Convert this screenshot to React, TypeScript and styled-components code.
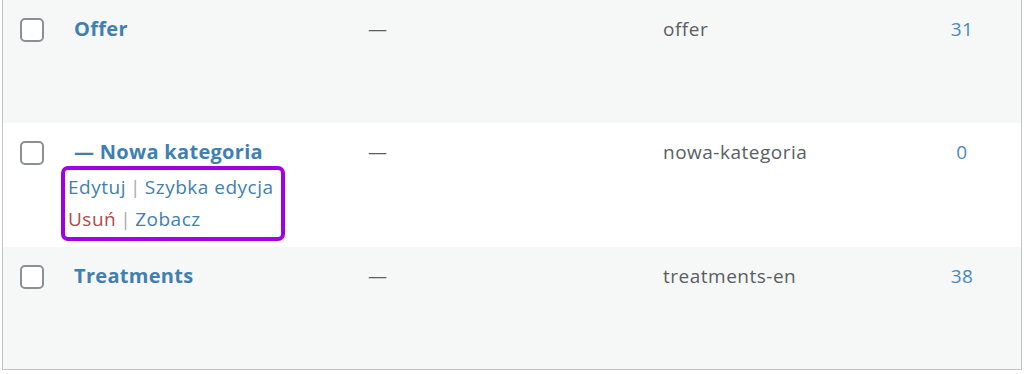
import React from 'react';
import styled, { createGlobalStyle } from 'styled-components';

const GlobalStyle = createGlobalStyle`
  html, body {
    margin: 0;
    padding: 0;
    background: #ffffff;
  }
  body {
    font-family: "Open Sans", "Noto Sans", Arial, sans-serif;
    -webkit-font-smoothing: antialiased;
  }
`;

const Table = styled.div`
  width: 1020px;
  margin-left: 2px;
  border-left: 1px solid #c3c4c7;
  border-right: 1px solid #c3c4c7;
  border-bottom: 1px solid #c3c4c7;
  box-sizing: border-box;
`;

const Row = styled.div<{ $alt?: boolean; $height: number }>`
  display: grid;
  grid-template-columns: 71px 294px 295px 262px 1fr;
  align-items: start;
  height: ${(p) => p.$height}px;
  padding-top: 17px;
  box-sizing: border-box;
  background: ${(p) => (p.$alt ? '#f6f7f7' : '#ffffff')};
`;

const CheckCell = styled.div`
  padding-left: 17px;
  padding-top: 1px;
`;

const Checkbox = styled.span`
  display: block;
  width: 24px;
  height: 24px;
  box-sizing: border-box;
  border: 2px solid #8c8f94;
  border-radius: 5px;
  background: #ffffff;
`;

const TitleCell = styled.div`
  display: flex;
  flex-direction: column;
  align-items: flex-start;
`;

const RowTitle = styled.a`
  font-size: 20px;
  font-weight: 700;
  letter-spacing: 0.3px;
  line-height: 24px;
  color: #3f7fb2;
  text-decoration: none;
`;

const Actions = styled.div`
  margin-top: 2px;
  margin-left: -13px;
  padding: 1px 7px 2px 3px;
  border: 4px solid #a000e6;
  border-radius: 7px;
  font-size: 19px;
  letter-spacing: 0.5px;
  line-height: 32px;
  background: #ffffff;
`;

const ActionLine = styled.div`
  white-space: nowrap;
`;

const ActionLink = styled.a<{ $danger?: boolean }>`
  color: ${(p) => (p.$danger ? '#b1494a' : '#3f7fb2')};
  text-decoration: none;
`;

const Sep = styled.span`
  color: #a7aaad;
  margin: 0 4px;
`;

const TextCell = styled.div`
  font-size: 19px;
  letter-spacing: 0.5px;
  line-height: 24px;
  color: #5a5e63;
`;

const CountCell = styled.div`
  font-size: 19px;
  letter-spacing: 0.5px;
  line-height: 24px;
  color: #4a89bd;
  width: 74px;
  text-align: center;
`;

type Category = {
  name: string;
  slug: string;
  count: number;
  child?: boolean;
  height: number;
};

const rows: Category[] = [
  { name: 'Offer', slug: 'offer', count: 31, height: 123 },
  { name: '— Nowa kategoria', slug: 'nowa-kategoria', count: 0, child: true, height: 124 },
  { name: 'Treatments', slug: 'treatments-en', count: 38, height: 122 },
];

const App: React.FC = () => (
  <>
    <GlobalStyle />
    <Table>
      {rows.map((row, i) => (
        <Row key={row.slug} $alt={i % 2 === 0} $height={row.height}>
          <CheckCell>
            <Checkbox />
          </CheckCell>
          <TitleCell>
            <RowTitle href="#">{row.name}</RowTitle>
            {row.child && (
              <Actions>
                <ActionLine>
                  <ActionLink href="#">Edytuj</ActionLink>
                  <Sep>|</Sep>
                  <ActionLink href="#">Szybka edycja</ActionLink>
                </ActionLine>
                <ActionLine>
                  <ActionLink href="#" $danger>
                    Usuń
                  </ActionLink>
                  <Sep>|</Sep>
                  <ActionLink href="#">Zobacz</ActionLink>
                </ActionLine>
              </Actions>
            )}
          </TitleCell>
          <TextCell>—</TextCell>
          <TextCell>{row.slug}</TextCell>
          <CountCell>{row.count}</CountCell>
        </Row>
      ))}
    </Table>
  </>
);

export default App;
